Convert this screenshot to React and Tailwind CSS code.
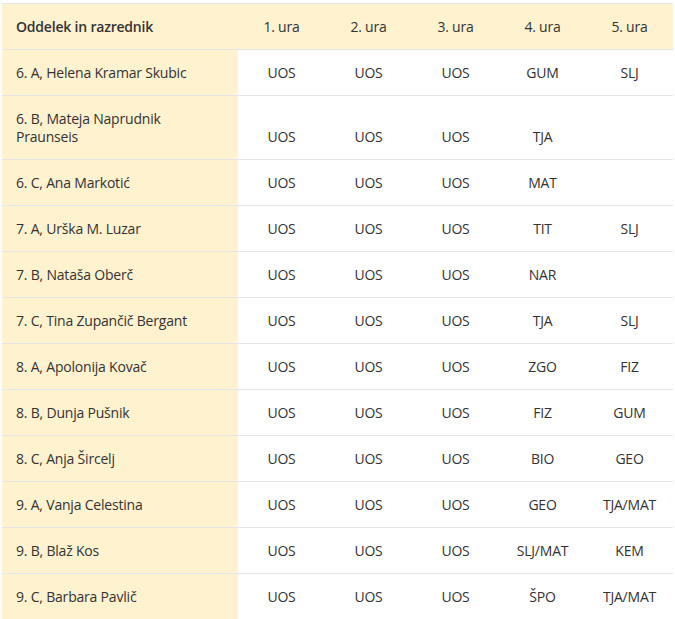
const rows=[
["6. A, Helena Kramar Skubic","UOS","UOS","UOS","GUM","SLJ"],
["6. B, Mateja Naprudnik Praunseis","UOS","UOS","UOS","TJA",""],
["6. C, Ana Markotić","UOS","UOS","UOS","MAT",""],
["7. A, Urška M. Luzar","UOS","UOS","UOS","TIT","SLJ"],
["7. B, Nataša Oberč","UOS","UOS","UOS","NAR",""],
["7. C, Tina Zupančič Bergant","UOS","UOS","UOS","TJA","SLJ"],
["8. A, Apolonija Kovač","UOS","UOS","UOS","ZGO","FIZ"],
["8. B, Dunja Pušnik","UOS","UOS","UOS","FIZ","GUM"],
["8. C, Anja Šircelj","UOS","UOS","UOS","BIO","GEO"],
["9. A, Vanja Celestina","UOS","UOS","UOS","GEO","TJA/MAT"],
["9. B, Blaž Kos","UOS","UOS","UOS","SLJ/MAT","KEM"],
["9. C, Barbara Pavlič","UOS","UOS","UOS","ŠPO","TJA/MAT"],
];
export default function App(){
return <div className="pt-[3px] pl-[2px] bg-white" style={{fontFamily:'"Open Sans","Noto Sans",sans-serif'}}>
<table className="w-[671px] border-collapse text-[14px] leading-[18px] text-[#333] table-fixed tracking-[-0.2px]">
<colgroup><col className="w-[236px]"/><col/><col/><col/><col/><col/></colgroup>
<thead><tr className="bg-[#fff2cf] border-t border-b border-[#e6e6e6]">
<th className="text-left font-semibold px-[14px] py-[13.5px] align-bottom">Oddelek in razrednik</th>
{["1. ura","2. ura","3. ura","4. ura","5. ura"].map(h=><th key={h} className="font-normal text-center py-[13.5px] align-bottom">{h}</th>)}
</tr></thead>
<tbody>{rows.map(r=><tr key={r[0]} className="border-b border-[#e6e6e6]">
<td className="bg-[#fff2cf] px-[14px] py-[13.5px] align-bottom">{r[0]}</td>
{r.slice(1).map((c,i)=><td key={i} className="text-center py-[13.5px] align-bottom">{c}</td>)}
</tr>)}</tbody></table></div>
}
